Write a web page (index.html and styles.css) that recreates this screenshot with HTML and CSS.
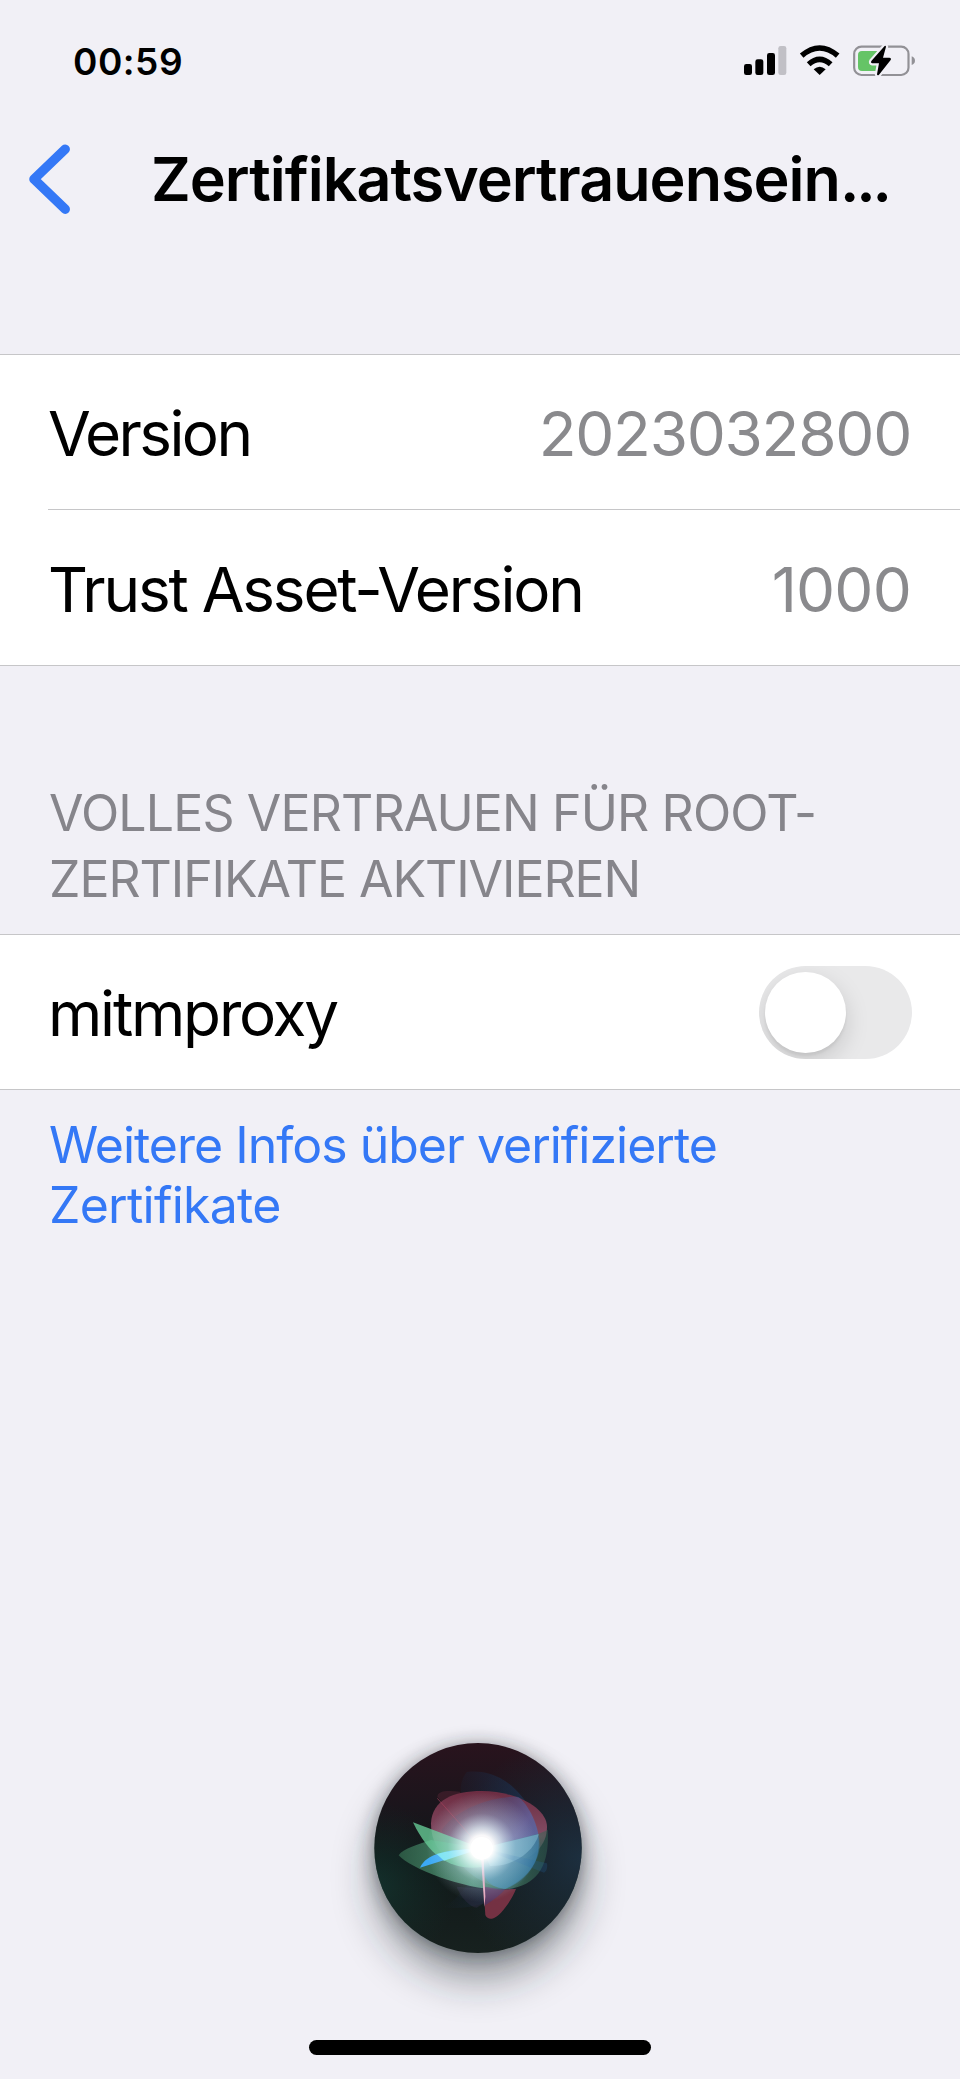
FILE: index.html
```html
<!DOCTYPE html>
<html lang="de">
<head>
<meta charset="utf-8">
<title>Zertifikatsvertrauenseinstellungen</title>
<link rel="stylesheet" href="styles.css">
</head>
<body>
<div class="screen">
  <header class="status">
    <span class="clock">00:59</span>
    <svg class="status-icons" width="220" height="60" viewBox="0 0 660 180" aria-hidden="true">
      <rect x="72" y="102" width="24" height="33" rx="7"/>
      <rect x="106" y="88" width="24" height="47" rx="7"/>
      <rect x="141" y="69" width="24" height="66" rx="7"/>
      <rect x="175" y="48" width="24" height="87" rx="7" fill="#c1c0c6"/>
      <g fill="none" stroke="#000" stroke-width="16.5">
        <path d="M245 77Q299 31 353 77"/>
        <path d="M266 103Q299 73 332 103"/>
      </g>
      <path d="M281 118Q299 103 317 118L299 135Z"/>
      <rect x="402.500" y="50" width="163" height="85" rx="22" fill="none" stroke="#929196" stroke-width="6.500"/>
      <rect x="414" y="63" width="68" height="60" rx="12" fill="#65c466"/>
      <path d="M575 79Q585 83 585 92Q585 101 575 105Z" fill="#929196"/>
      <path d="M494 48L454 93Q451 99 457 100H477L471 133Q472 138 477 134L512 90Q515 84 508 83H489L498 50Q497 46 494 48Z" stroke="#f1f0f6" stroke-width="13" paint-order="stroke"/>
    </svg>
  </header>
  <nav class="navbar">
    <svg class="back" width="50" height="80" viewBox="0 0 50 80" aria-label="Zurück"><path d="M45.200 9.200L14 39.200L45.200 69.200" fill="none" stroke="#3478f6" stroke-width="9.500" stroke-linecap="round" stroke-linejoin="round"/></svg>
    <h1 class="title">Zertifikatsvertrauensein<span class="dots">...</span></h1>
  </nav>
  <main class="content">
    <section class="list">
      <div class="row row-split"><span class="label version">Version</span><span class="value long">2023032800</span></div>
      <div class="row"><span class="label asset">Trust Asset-Version</span><span class="value">1000</span></div>
    </section>
    <h2 class="section-title"><span class="line-a">VOLLES VERTRAUEN FÜR ROOT-</span><br><span class="line-b">ZERTIFIKATE AKTIVIEREN</span></h2>
    <section class="list">
      <div class="row row-single"><span class="label mitm">mitmproxy</span><span class="switch" role="switch" aria-checked="false"><span class="knob"></span></span></div>
    </section>
    <a class="more">Weitere Infos über verifizierte<br><span class="more-end">Zertifikate</span></a>
  </main>
  <footer class="dock">
    <div class="siri">
      <svg width="300" height="330" viewBox="0 0 900 990" aria-label="Siri">
        <defs>
          <linearGradient id="base" x1="0" y1="0" x2="0" y2="1"><stop offset="0" stop-color="#29131d"/><stop offset=".3" stop-color="#1b151c"/><stop offset=".55" stop-color="#101718"/><stop offset="1" stop-color="#17211f"/></linearGradient>
          <radialGradient id="right" cx="1" cy=".55" r=".6"><stop offset="0" stop-color="#203549" stop-opacity=".8"/><stop offset="1" stop-color="#203040" stop-opacity="0"/></radialGradient>
          <radialGradient id="left" cx="0" cy=".68" r=".4"><stop offset="0" stop-color="#153f38" stop-opacity=".6"/><stop offset="1" stop-color="#12342c" stop-opacity="0"/></radialGradient>
          <linearGradient id="red" x1="0" y1="0" x2="0" y2="1"><stop offset="0" stop-color="#722d43"/><stop offset=".6" stop-color="#8b5069"/><stop offset="1" stop-color="#507277" stop-opacity=".3"/></linearGradient>
          <linearGradient id="blue" x1="0" y1="0" x2="1" y2=".7"><stop offset="0" stop-color="#173451" stop-opacity="0"/><stop offset=".7" stop-color="#5271bf" stop-opacity=".55"/><stop offset="1" stop-color="#3475bf" stop-opacity=".65"/></linearGradient>
          <linearGradient id="back" x1="0" y1="0" x2="1" y2="0"><stop offset="0" stop-color="#18304c" stop-opacity="0"/><stop offset="1" stop-color="#1c3558" stop-opacity=".75"/></linearGradient>
          <linearGradient id="green" x1="0" y1="0" x2="1" y2="0"><stop offset="0" stop-color="#356b50"/><stop offset=".5" stop-color="#61b58e"/><stop offset="1" stop-color="#32604f" stop-opacity=".7"/></linearGradient>
          <radialGradient id="glow"><stop offset="0" stop-color="#fff"/><stop offset=".22" stop-color="#fff"/><stop offset=".36" stop-color="#eafaff" stop-opacity=".78"/><stop offset=".62" stop-color="#c9e4f5" stop-opacity=".3"/><stop offset="1" stop-color="#bde" stop-opacity="0"/></radialGradient>
          <filter id="s1" x="-50%" y="-50%" width="200%" height="200%"><feGaussianBlur stdDeviation="65"/></filter>
          <filter id="s2" x="-50%" y="-50%" width="200%" height="200%"><feGaussianBlur stdDeviation="28"/></filter>
        </defs>
        <ellipse cx="445" cy="530" rx="305" ry="300" fill="#1c2829" opacity=".5" filter="url(#s1)"/>
        <circle cx="444" cy="446" r="310" fill="#1c2025" opacity=".5" filter="url(#s2)"/>
        <ellipse cx="444" cy="444" rx="311" ry="315" fill="url(#base)"/>
        <ellipse cx="444" cy="444" rx="311" ry="315" fill="url(#right)"/>
        <ellipse cx="444" cy="444" rx="311" ry="315" fill="url(#left)"/>
        <path d="M410 216C540 200 630 330 629 440C620 545 475 640 340 622C400 590 455 500 455 445C430 360 360 280 410 216Z" fill="url(#back)"/>
        <path d="M322 290C325 270 355 272 390 275L455 445Z" fill="#782e43" opacity=".3"/>
        <path d="M303 370C306 300 370 273 455 273C560 273 650 325 651 380C651 450 590 500 450 500C345 500 303 440 303 370Z" fill="url(#red)" opacity=".92"/>
        <path d="M335 390C370 335 480 285 566 291C605 325 629 390 629 440C622 505 570 545 526 566C420 550 350 460 335 390Z" fill="url(#blue)"/>
        <path d="M206 466C220 445 260 435 303 420L455 445L624 402L653 390C660 500 620 567 510 569C400 568 240 505 206 466Z" fill="url(#green)" opacity=".72"/>
        <path d="M455 445L624 402C640 500 570 550 526 567C470 565 440 510 455 445Z" fill="#438fc5" opacity=".48"/>
        <path d="M249 367L455 445L455 501C370 512 302 478 249 367Z" fill="#65c995" opacity=".8"/>
        <path d="M270 503C290 460 350 450 455 445Z" fill="#3caaf5"/>
        <path d="M320 462Q370 448 455 445L342 482Z" fill="#7ff5f4" opacity=".8"/>
        <path d="M457 445L627 402C610 460 545 500 480 498Z" fill="#a6dcec" opacity=".34"/>
        <path d="M455 445L651 490Q654 512 642 518Z" fill="#246aaa" opacity=".22"/>
        <path d="M380 560C390 590 420 622 440 623L462 610L460 566Z" fill="#33304a" opacity=".4"/>
        <path d="M456 470L460 560L466 645Q472 658 486 656C510 652 545 600 558 567L510 569L463 560Z" fill="#853549" opacity=".85"/>
        <path d="M463 560L464 617Q505 592 526 568Z" fill="#3c3f80" opacity=".45"/>
        <path d="M322 295L455 445" stroke="#a7415c" stroke-width="3" opacity=".65"/>
        <path d="M453 470L461 470L466 590L463 620Z" fill="#eba8bc"/>
        <circle cx="455" cy="442" r="165" fill="url(#glow)" opacity=".96"/>
        <circle cx="455" cy="445" r="34" fill="#fff"/>
      </svg>
    </div>
    <div class="home-indicator"></div>
  </footer>
</div>
</body>
</html>
```
FILE: styles.css
```css
* { box-sizing: border-box; }
body { margin: 0; background: #f1f0f6; font-family: Inter, "Liberation Sans", sans-serif; color: #000; }
.screen { width: 960px; height: 2079px; display: flex; flex-direction: column; overflow: hidden; }
.status { height: 120px; padding: 30px 20px 0 73px; display: flex; justify-content: space-between; }
.clock { font-size: 37px; font-weight: 600; line-height: 63px; letter-spacing: 0.5px; }
.status-icons { display: block; }
.navbar { height: 234px; padding: 20px 0 0 20px; display: flex; }
.back { flex: none; }
.title { margin: 0 0 0 81px; font-size: 61px; font-weight: 600; line-height: 78px; letter-spacing: -1px; white-space: nowrap; }
.dots { letter-spacing: -3.2px; }
.list { background: #fff; border-top: 1px solid #c6c6c8; border-bottom: 1px solid #c6c6c8; }
.row { height: 155px; margin-left: 48px; padding-right: 48px; display: flex; align-items: center; justify-content: space-between; white-space: nowrap; }
.row-split { border-bottom: 1px solid #c6c6c8; }
.row-single { height: 154px; }
.label, .value { font-size: 62px; line-height: 76px; padding-top: 4px; }
.version { letter-spacing: -2.6px; }
.asset, .mitm { letter-spacing: -2.2px; }
.value { color: #8a8a8d; letter-spacing: -0.8px; margin-right: 1px; }
.long { letter-spacing: -1.25px; }
.section-title { margin: 0; height: 268px; padding: 114px 0 0 49px; font-size: 50px; line-height: 66px; font-weight: 400; letter-spacing: -1.05px; color: #86858b; white-space: nowrap; }
.line-a { letter-spacing: -0.85px; }
.switch { width: 153px; height: 93px; padding: 6px; border-radius: 47px; background: #e9e9ea; overflow: hidden; }
.knob { display: block; width: 81px; height: 81px; border-radius: 50%; background: #fff; box-shadow: 0 9px 24px rgba(0, 0, 0, .15), 0 3px 3px rgba(0, 0, 0, .06); }
.more { display: block; padding: 25px 0 0 49px; font-size: 50px; line-height: 60px; letter-spacing: -1px; color: #3478f6; }
.more-end { letter-spacing: -0.75px; }
.dock { margin-top: auto; height: 379px; display: flex; flex-direction: column; align-items: center; }
.siri { height: 340px; width: 300px; }
.siri svg { display: block; overflow: visible; }
.home-indicator { width: 342px; height: 15px; border-radius: 8px; background: #000; }
```
